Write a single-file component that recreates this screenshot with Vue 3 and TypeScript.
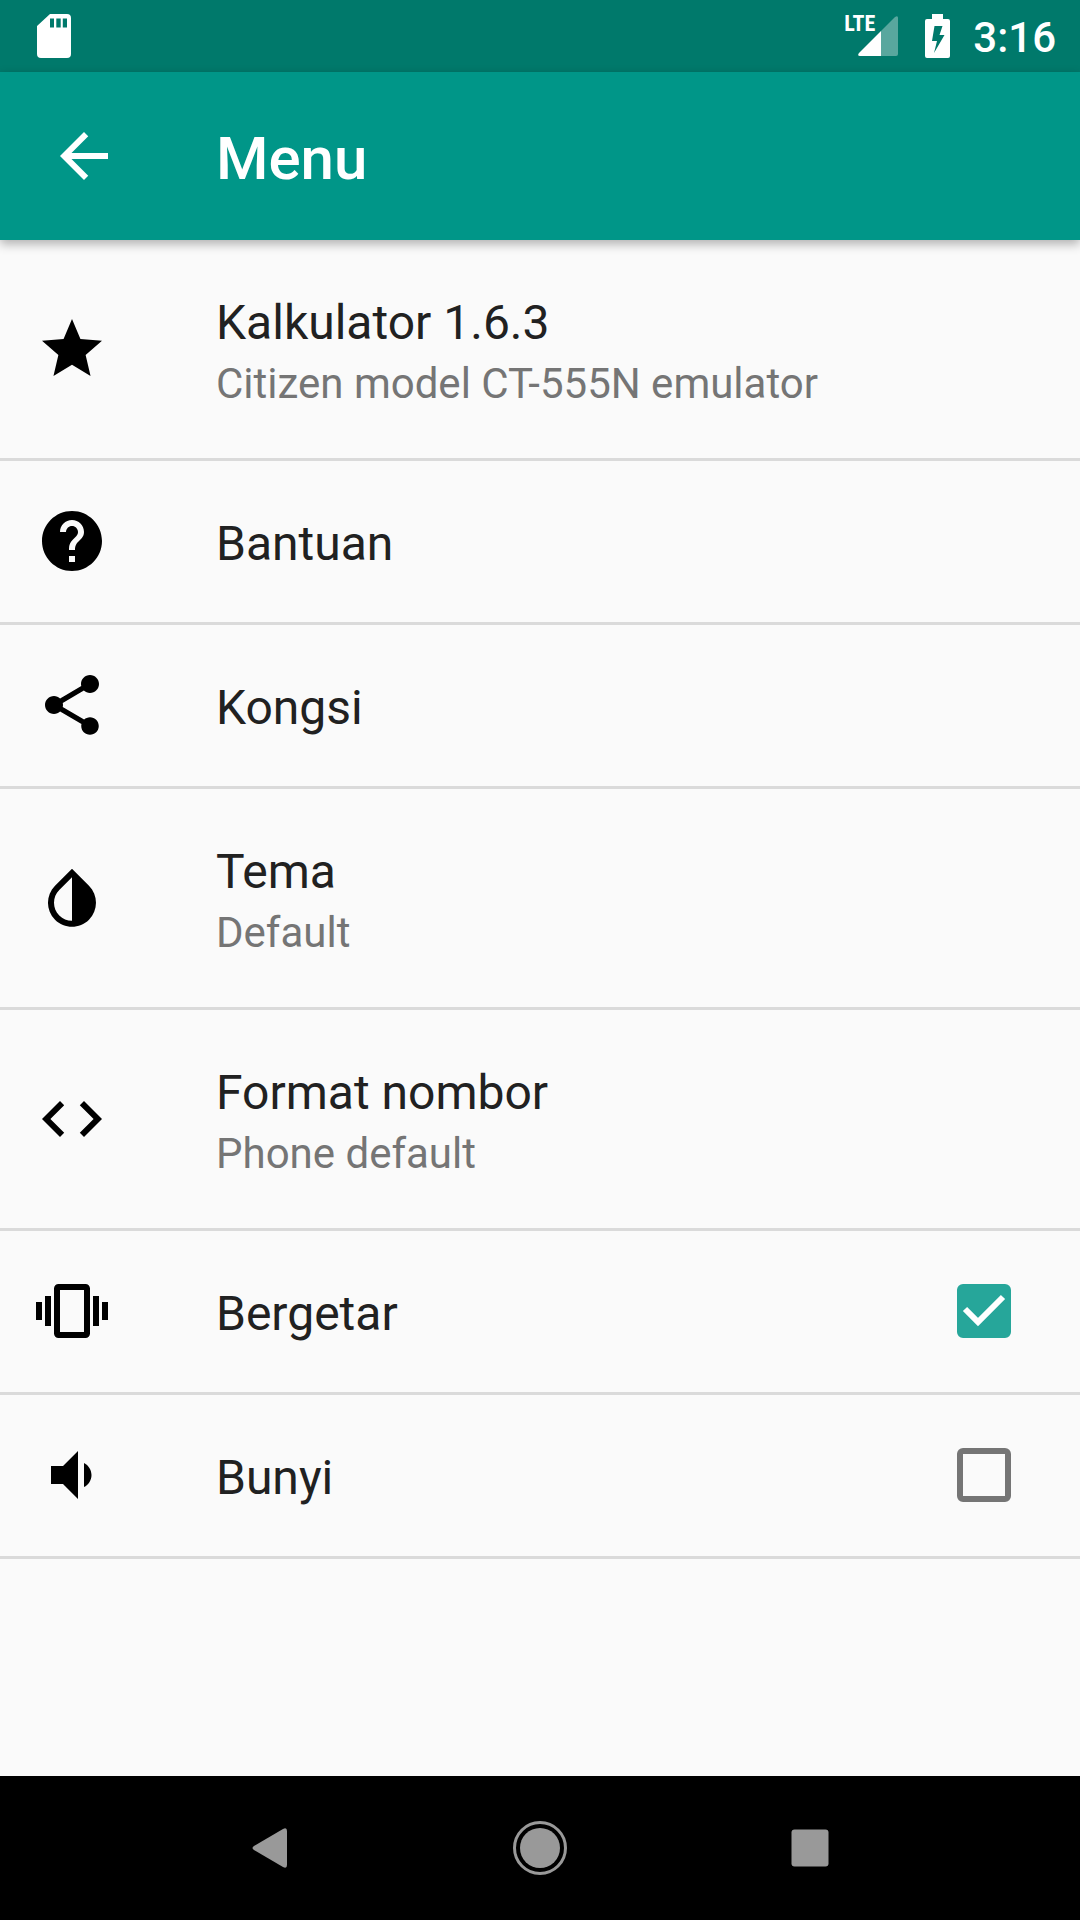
<script setup lang="ts">
import { reactive } from 'vue'

interface MenuAction {
  id: string
  title: string
  summary?: string
  icon: string
}

interface MenuToggle {
  id: string
  title: string
  icon: string
  checked: boolean
}

const actions: MenuAction[] = [
  {
    id: 'about',
    title: 'Kalkulator 1.6.3',
    summary: 'Citizen model CT-555N emulator',
    icon: 'M12 17.27L18.18 21l-1.64-7.03L22 9.24l-7.19-.61L12 2 9.19 8.63 2 9.24l5.46 4.73L5.82 21z',
  },
  {
    id: 'help',
    title: 'Bantuan',
    icon: 'M12 2C6.48 2 2 6.48 2 12s4.48 10 10 10 10-4.48 10-10S17.52 2 12 2zm1 17h-2v-2h2v2zm2.07-7.75l-.9.92C13.45 12.9 13 13.5 13 15h-2v-.5c0-1.1.45-2.1 1.17-2.83l1.24-1.26c.37-.36.59-.86.59-1.41 0-1.1-.9-2-2-2s-2 .9-2 2H8c0-2.21 1.79-4 4-4s4 1.79 4 4c0 .88-.36 1.68-.93 2.25z',
  },
  {
    id: 'share',
    title: 'Kongsi',
    icon: 'M18 16.08c-.76 0-1.44.3-1.96.77L8.91 12.7c.05-.23.09-.46.09-.7s-.04-.47-.09-.7l7.05-4.11c.54.5 1.25.81 2.04.81 1.66 0 3-1.34 3-3s-1.34-3-3-3-3 1.34-3 3c0 .24.04.47.09.7L8.04 9.81C7.5 9.31 6.79 9 6 9c-1.66 0-3 1.34-3 3s1.34 3 3 3c.79 0 1.5-.31 2.04-.81l7.12 4.16c-.05.21-.08.43-.08.65 0 1.61 1.31 2.92 2.92 2.92s2.92-1.31 2.92-2.92-1.31-2.92-2.92-2.92z',
  },
  {
    id: 'theme',
    title: 'Tema',
    summary: 'Default',
    icon: 'M17.66 7.93L12 2.27 6.34 7.93c-3.12 3.12-3.12 8.19 0 11.31C7.9 20.8 9.95 21.58 12 21.58s4.1-.78 5.66-2.34c3.12-3.12 3.12-8.19 0-11.31zM12 19.59c-1.6 0-3.11-.62-4.24-1.76C6.62 16.69 6 15.19 6 13.59s.62-3.11 1.76-4.24L12 5.1v14.49z',
  },
  {
    id: 'format',
    title: 'Format nombor',
    summary: 'Phone default',
    icon: 'M9.4 16.6L4.8 12l4.6-4.6L8 6l-6 6 6 6 1.4-1.4zm5.2 0l4.6-4.6-4.6-4.6L16 6l6 6-6 6-1.4-1.4z',
  },
]

const toggles = reactive<MenuToggle[]>([
  {
    id: 'vibrate',
    title: 'Bergetar',
    icon: 'M0 15h2V9H0v6zm3 2h2V7H3v10zm19-8v6h2V9h-2zm-3 8h2V7h-2v10zM16.5 3h-9C6.67 3 6 3.67 6 4.5v15c0 .83.67 1.5 1.5 1.5h9c.83 0 1.5-.67 1.5-1.5v-15c0-.83-.67-1.5-1.5-1.5zM16 19H8V5h8v14z',
    checked: true,
  },
  {
    id: 'sound',
    title: 'Bunyi',
    icon: 'M18.5 12c0-1.77-1.02-3.29-2.5-4.03v8.05c1.48-.73 2.5-2.25 2.5-4.02zM5 9v6h4l5 5V4L9 9H5z',
    checked: false,
  },
])
</script>

<template>
  <div class="screen">
    <div class="status-bar">
      <svg class="sd-card" viewBox="0 0 34 44" aria-hidden="true">
        <path fill-rule="evenodd" d="M13 0H30Q34 0 34 4V40Q34 44 30 44H4Q0 44 0 40V12ZM13 4.5V13.5H17V4.5ZM19.3 4.5V13.5H23.7V4.5ZM25.8 4.5V13.5H30V4.5Z" />
      </svg>
      <div class="status-right">
        <div class="signal">
          <span class="network">LTE</span>
          <svg class="signal-bars" viewBox="0 0 40 40" aria-hidden="true">
            <path class="faint" d="M23 15L37 1Q40-1 40 2V38Q40 40 38 40H23Z" />
            <path d="M23 15V40H2Q-1 40 1 37Z" />
          </svg>
        </div>
        <svg class="battery" viewBox="0 0 25 44" aria-hidden="true">
          <path fill-rule="evenodd" d="M7 0H18V5H23Q25 5 25 7V42Q25 44 23 44H2Q0 44 0 42V7Q0 5 2 5H7ZM9.5 12L7 27H12L9 39L19.5 21H14.5L17.5 12Z" />
        </svg>
        <time class="clock">3:16</time>
      </div>
    </div>

    <header class="toolbar">
      <button class="back" type="button" aria-label="Kembali">
        <svg class="icon" viewBox="0 0 24 24" aria-hidden="true">
          <path d="M20 11H7.83l5.59-5.59L12 4l-8 8 8 8 1.41-1.41L7.83 13H20v-2z" />
        </svg>
      </button>
      <h1 class="heading">Menu</h1>
    </header>

    <main class="menu">
      <button
        v-for="item in actions"
        :key="item.id"
        class="row"
        :class="{ tall: item.summary }"
        type="button"
      >
        <svg class="icon" viewBox="0 0 24 24" aria-hidden="true"><path :d="item.icon" /></svg>
        <span class="texts">
          <span class="title">{{ item.title }}</span>
          <span v-if="item.summary" class="summary">{{ item.summary }}</span>
        </span>
      </button>
      <label v-for="item in toggles" :key="item.id" class="row" :for="item.id">
        <svg class="icon" viewBox="0 0 24 24" aria-hidden="true"><path :d="item.icon" /></svg>
        <span class="texts">
          <span class="title">{{ item.title }}</span>
        </span>
        <span class="check">
          <input :id="item.id" v-model="item.checked" class="box" type="checkbox" />
          <svg v-if="item.checked" class="tick" viewBox="0 0 54 54" aria-hidden="true">
            <path d="M8 25L21 38L46 13" />
          </svg>
        </span>
      </label>
    </main>

    <nav class="nav-bar">
      <button class="nav-button" type="button" aria-label="Back">
        <svg class="nav-icon" viewBox="0 0 54 54" aria-hidden="true">
          <path d="M11 25L40 8Q44 6 44 10V44Q44 48 40 46L11 29Q8 27 11 25Z" />
        </svg>
      </button>
      <button class="nav-button" type="button" aria-label="Home">
        <svg class="nav-icon" viewBox="0 0 54 54" aria-hidden="true">
          <circle class="ring" cx="27" cy="27" r="25.5" />
          <circle cx="27" cy="27" r="20" />
        </svg>
      </button>
      <button class="nav-button" type="button" aria-label="Overview">
        <svg class="nav-icon" viewBox="0 0 54 54" aria-hidden="true">
          <rect x="8.5" y="8.5" width="37" height="37" rx="3" />
        </svg>
      </button>
    </nav>
  </div>
</template>

<style>
body {
  margin: 0;
}
</style>

<style scoped>
.screen {
  display: flex;
  flex-direction: column;
  min-height: 100vh;
  background: #fafafa;
  color: #212121;
  font-family: Roboto, "Noto Sans", sans-serif;
}

button {
  margin: 0;
  padding: 0;
  border: 0;
  background: none;
  color: inherit;
  font: inherit;
  cursor: pointer;
}

svg {
  display: block;
  flex: none;
  fill: currentColor;
}

.icon {
  width: 72px;
  height: 72px;
}

.status-bar {
  display: flex;
  align-items: center;
  justify-content: space-between;
  height: 72px;
  padding: 0 24px 0 37px;
  background: #00796b;
  color: #fff;
}

.sd-card {
  width: 34px;
  height: 44px;
}

.status-right {
  display: flex;
  align-items: center;
}

.signal {
  position: relative;
  display: flex;
  justify-content: flex-end;
  width: 54px;
  margin-right: 27px;
}

.network {
  position: absolute;
  top: -4px;
  left: 0;
  font-family: "Roboto Condensed", "Liberation Sans Narrow", Roboto, sans-serif;
  font-size: 22px;
  font-weight: 700;
  line-height: 24px;
}

.signal-bars {
  width: 40px;
  height: 40px;
}

.faint {
  opacity: 0.35;
}

.battery {
  width: 25px;
  height: 44px;
  margin-right: 23px;
}

.clock {
  padding-top: 4px;
  font-size: 42px;
  font-weight: 500;
  line-height: 48px;
}

.toolbar {
  position: relative;
  z-index: 1;
  display: flex;
  align-items: center;
  height: 168px;
  background: #009688;
  color: #fff;
  box-shadow: 0 4px 10px rgba(0, 0, 0, 0.3);
}

.back {
  display: flex;
  align-items: center;
  justify-content: center;
  width: 168px;
  height: 168px;
  margin-right: 48px;
}

.heading {
  margin: 0;
  padding-top: 6px;
  font-size: 60px;
  font-weight: 500;
  line-height: 72px;
}

.menu {
  display: flex;
  flex: 1;
  flex-direction: column;
}

.row {
  display: flex;
  align-items: center;
  box-sizing: border-box;
  min-height: 164px;
  padding: 0 69px 1px 36px;
  border-bottom: 3px solid #dadada;
  text-align: left;
  cursor: pointer;
}

.row.tall {
  min-height: 221px;
  padding-bottom: 0;
}

.row .icon {
  margin-right: 108px;
  color: #000;
}

.texts {
  display: flex;
  flex: 1;
  flex-direction: column;
  gap: 6px;
  padding-top: 6px;
}

.title {
  font-size: 48px;
  line-height: 58px;
}

.summary {
  color: #757575;
  font-size: 42px;
  line-height: 52px;
}

.check {
  position: relative;
  display: flex;
}

.box {
  width: 54px;
  height: 54px;
  margin: 0;
  border: 6px solid #757575;
  border-radius: 6px;
  appearance: none;
  cursor: pointer;
}

.box:checked {
  border-color: #26a69a;
  background: #26a69a;
}

.tick {
  position: absolute;
  inset: 0;
  width: 54px;
  height: 54px;
  fill: none;
  stroke: #fff;
  stroke-width: 6;
  pointer-events: none;
}

.nav-bar {
  display: flex;
  height: 144px;
  padding: 0 12.5%;
  background: #000;
  color: #999;
}

.nav-button {
  display: flex;
  flex: 1;
  align-items: center;
  justify-content: center;
}

.nav-icon {
  width: 54px;
  height: 54px;
}

.ring {
  fill: none;
  stroke: currentColor;
  stroke-width: 3;
}
</style>
